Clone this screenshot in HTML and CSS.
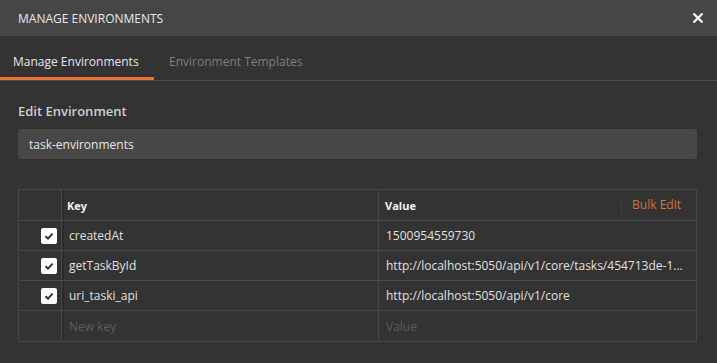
FILE: index.html
```html
<!DOCTYPE html>
<html lang="en">
<head>
  <meta charset="UTF-8">
  <title>Manage Environments</title>
  <link rel="stylesheet" href="styles.css">
</head>
<body>
  <div class="modal">
    <div class="modal-header">
      <div class="modal-title">MANAGE ENVIRONMENTS</div>
      <button class="close-button">
        <svg viewBox="0 0 12 12" class="close-icon">
          <path d="M1.5 1.5 L10.5 10.5 M10.5 1.5 L1.5 10.5"/>
        </svg>
      </button>
    </div>
    <div class="tabs">
      <div class="tab active">Manage Environments</div>
      <div class="tab">Environment Templates</div>
    </div>
    <div class="modal-body">
      <div class="section-label">Edit Environment</div>
      <input class="env-name" type="text" value="task-environments">

      <div class="kv-table">
        <div class="kv-row kv-head">
          <div class="cell cell-check"></div>
          <div class="cell cell-key">Key</div>
          <div class="cell cell-value">
            <span>Value</span>
            <span class="bulk-edit">Bulk Edit</span>
          </div>
        </div>
        <div class="kv-row">
          <div class="cell cell-check"><span class="checkbox"><svg viewBox="0 0 16 16"><path d="M4.5 8.3 L7 10.6 L11.6 5.6"/></svg></span></div>
          <div class="cell cell-key">createdAt</div>
          <div class="cell cell-value">1500954559730</div>
        </div>
        <div class="kv-row">
          <div class="cell cell-check"><span class="checkbox"><svg viewBox="0 0 16 16"><path d="M4.5 8.3 L7 10.6 L11.6 5.6"/></svg></span></div>
          <div class="cell cell-key">getTaskById</div>
          <div class="cell cell-value">http://localhost:5050/api/v1/core/tasks/454713de-1...</div>
        </div>
        <div class="kv-row">
          <div class="cell cell-check"><span class="checkbox"><svg viewBox="0 0 16 16"><path d="M4.5 8.3 L7 10.6 L11.6 5.6"/></svg></span></div>
          <div class="cell cell-key">uri_taski_api</div>
          <div class="cell cell-value">http://localhost:5050/api/v1/core</div>
        </div>
        <div class="kv-row">
          <div class="cell cell-check"></div>
          <div class="cell cell-key placeholder">New key</div>
          <div class="cell cell-value placeholder">Value</div>
        </div>
      </div>
    </div>
  </div>
</body>
</html>
```

FILE: styles.css
```css
* {
  margin: 0;
  padding: 0;
  box-sizing: border-box;
  font-family: 'Open Sans', 'Noto Sans', sans-serif;
}

body {
  background: #333333;
  color: #e6e6e6;
  width: 717px;
  height: 363px;
  overflow: hidden;
}

.modal-header {
  height: 36px;
  background: #464646;
  display: flex;
  align-items: center;
  justify-content: space-between;
  padding: 0 12px 0 18px;
}

.modal-title {
  font-size: 12px;
  color: #e8e8e8;
}

.close-button {
  background: none;
  border: none;
  width: 14px;
  height: 14px;
  display: flex;
  align-items: center;
  justify-content: center;
}

.close-icon {
  width: 12px;
  height: 12px;
  stroke: #ffffff;
  stroke-width: 2.2;
  fill: none;
}

.tabs {
  display: flex;
  height: 45px;
  border-bottom: 1px solid #474747;
}

.tab {
  font-size: 12px;
  line-height: 16px;
  color: #7e7e7e;
  padding: 18px 15px 0 15px;
  white-space: nowrap;
}

.tab.active {
  color: #e6e6e6;
  border-bottom: 3px solid #e8733a;
  width: 154px;
  padding-left: 13px;
}

.modal-body {
  padding: 21px 20px 0 18px;
}

.section-label {
  font-size: 13px;
  font-weight: 600;
  color: #cfcfcf;
  margin-bottom: 9px;
}

.env-name {
  display: block;
  width: 100%;
  height: 30px;
  background: #474747;
  border: none;
  border-radius: 3px;
  color: #e6e6e6;
  font-size: 12px;
  padding: 0 11px;
  outline: none;
  margin-bottom: 30px;
}

.kv-table {
  border: 1px solid #474747;
}

.kv-row {
  display: flex;
  height: 30px;
  border-bottom: 1px solid #474747;
}

.kv-row:last-child {
  border-bottom: none;
}

.kv-head {
  height: 31px;
}

.cell {
  display: flex;
  align-items: center;
  font-size: 12px;
  color: #e0e0e0;
  white-space: nowrap;
  overflow: hidden;
}

.kv-head .cell {
  font-size: 11px;
  font-weight: 700;
  color: #f2f2f2;
}

.cell-check {
  width: 43px;
  justify-content: flex-end;
  padding-right: 4px;
  border-right: 1px solid #474747;
  box-shadow: 2px 0 0 #2b2b2b;
}

.cell-key {
  width: 315px;
  padding-left: 5px;
  margin-left: 2px;
  border-right: 1px solid #474747;
}

.kv-head .cell-key {
  padding-left: 3px;
}

.cell-value {
  flex: 1;
  padding-left: 7px;
  justify-content: space-between;
}

.kv-head .cell-value {
  padding-left: 6px;
}

.kv-head .bulk-edit {
  font-size: 12px;
  font-weight: 400;
  color: #d9703a;
  padding: 0 15px 0 10px;
  border-left: 1px solid #3e3e3e;
  line-height: 18px;
}

.kv-row .placeholder {
  color: #5c5c5c;
}

.checkbox {
  width: 16px;
  height: 16px;
  background: #ffffff;
  border-radius: 2px;
  display: flex;
}

.checkbox svg {
  width: 16px;
  height: 16px;
  stroke: #333333;
  stroke-width: 2;
  fill: none;
}
```
